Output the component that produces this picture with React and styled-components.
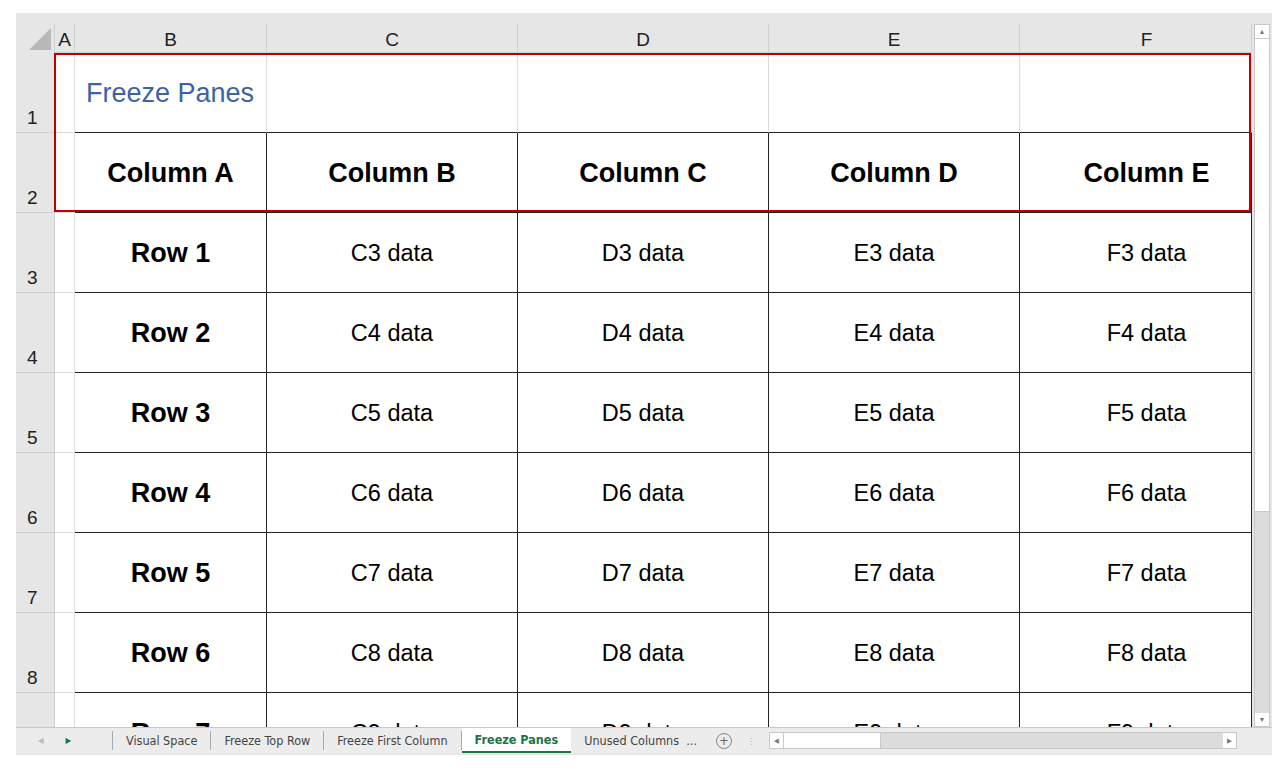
import React from 'react';
import styled, { createGlobalStyle } from 'styled-components';

const Global = createGlobalStyle`
  body { margin: 0; background: #fff; font-family: Arial, "Liberation Sans", sans-serif; }
`;

const Frame = styled.div`
  margin: 13px 16px 0;
  width: 1256px;
  height: 742px;
  display: flex;
  flex-direction: column;
  background: #e6e6e6;
`;

const Main = styled.div`
  display: flex;
  height: 714px;
`;

const Sheet = styled.div`
  position: relative;
  width: 1236px;
  overflow: hidden;
  background: #fff;
`;

const Grid = styled.div`
  display: grid;
  grid-template-columns: 39px 20px 192px 251px 251px 251px 232px;
  grid-template-rows: 11px 29px repeat(9, 80px);
`;

const Strip = styled.div`
  grid-column: 1 / -1;
  background: #e6e6e6;
`;

const Corner = styled.div`
  background: #e6e6e6;
  border-right: 1px solid #d0d0d0;
  position: relative;
  &::after {
    content: '';
    position: absolute;
    right: 3px;
    bottom: 3px;
    border-style: solid;
    border-width: 0 0 22px 22px;
    border-color: transparent transparent #b8b8b8 transparent;
  }
`;

const ColHead = styled.div`
  background: #e6e6e6;
  border-right: 1px solid #d0d0d0;
  border-bottom: 1px solid #d0d0d0;
  display: flex;
  align-items: center;
  justify-content: center;
  font-size: 19px;
  color: #222;
  padding-top: 3px;
  padding-left: ${p => (p.last ? '22px' : '0')};
`;

const RowHead = styled.div`
  background: #e6e6e6;
  border-bottom: 1px solid #d0d0d0;
  border-right: 1px solid #d0d0d0;
  display: flex;
  align-items: flex-end;
  padding: 0 0 3px 11px;
  font-size: 19px;
  color: #222;
`;

const Cell = styled.div`
  display: flex;
  align-items: center;
  justify-content: ${p => (p.left ? 'flex-start' : 'center')};
  padding-left: ${p => (p.left ? '11px' : p.last ? '22px' : '0')};
  border-right: 1px solid ${p => (p.dark ? '#222' : '#dcdcdc')};
  border-bottom: 1px solid ${p => (p.dark || p.under ? '#222' : '#dcdcdc')};
  font-size: ${p => (p.title ? '27px' : p.bold ? '27px' : '23.5px')};
  font-weight: ${p => (p.bold ? 700 : 400)};
  color: ${p => (p.title ? '#3d62a6' : '#000')};
  padding-top: 2px;
`;

const FreezeBox = styled.div`
  position: absolute;
  left: 38px;
  top: 40px;
  width: 1197px;
  height: 159px;
  border: 2px solid #c00000;
  box-sizing: border-box;
  pointer-events: none;
`;

const VScroll = styled.div`
  width: 20px;
  display: flex;
  flex-direction: column;
  align-items: center;
  padding-top: 11px;
  background: #e6e6e6;
`;

const VTrack = styled.div`
  width: 16px;
  flex: 1;
  display: flex;
  flex-direction: column;
  background: #dcdcdc;
  border: 1px solid #c8c8c8;
  box-sizing: border-box;
`;

const Arrow = styled.div`
  height: 13px;
  background: #fff;
  display: flex;
  align-items: center;
  justify-content: center;
  font-size: 7px;
  color: #777;
`;

const VThumb = styled.div`
  height: 472px;
  background: #fff;
  border-top: 1px solid #c8c8c8;
  border-bottom: 1px solid #c8c8c8;
`;

const Spacer = styled.div`
  flex: 1;
`;

const TabBar = styled.div`
  height: 25px;
  display: flex;
  align-items: stretch;
  background: #ececec;
  border-top: 1px solid #c8c8c8;
  font-family: "Liberation Sans Narrow", "DejaVu Sans Condensed", Arial, sans-serif;
  font-size: 12.5px;
  color: #444;
  white-space: nowrap;
`;

const Nav = styled.div`
  width: 97px;
  display: flex;
  align-items: center;
  gap: 22px;
  padding-left: 22px;
  font-size: 8px;
  color: #bbb;
  border-right: 1px solid #aaa;
  margin: 3px 0;
  box-sizing: border-box;
  span + span { color: #217346; }
`;

const Tab = styled.div`
  display: flex;
  align-items: center;
  padding: 0 13px;
  margin: ${p => (p.active ? '0' : '3px 0')};
  border-right: ${p => (p.active || p.plain ? 'none' : '1px solid #aaa')};
  background: ${p => (p.active ? '#fff' : 'transparent')};
  color: ${p => (p.active ? '#217346' : '#444')};
  font-weight: ${p => (p.active ? 700 : 400)};
  border-bottom: ${p => (p.active ? '2px solid #217346' : 'none')};
`;

const Plus = styled.div`
  width: 14px;
  height: 14px;
  border: 1px solid #888;
  border-radius: 50%;
  align-self: center;
  margin-left: 6px;
  display: flex;
  align-items: center;
  justify-content: center;
  font-size: 13px;
  line-height: 1;
  color: #666;
`;

const Dots = styled.div`
  align-self: center;
  margin: 0 12px 0 14px;
  color: #bbb;
  font-size: 10px;
  letter-spacing: -1px;
  writing-mode: vertical-rl;
`;

const HScroll = styled.div`
  width: 466px;
  height: 15px;
  align-self: center;
  display: flex;
  background: #dcdcdc;
  border: 1px solid #c8c8c8;
`;

const HThumb = styled.div`
  width: 96px;
  background: #fff;
  border-left: 1px solid #c8c8c8;
  border-right: 1px solid #c8c8c8;
`;

const HArrow = styled.div`
  width: 13px;
  background: #fff;
  display: flex;
  align-items: center;
  justify-content: center;
  font-size: 7px;
  color: #777;
`;

const cols = ['A', 'B', 'C', 'D', 'E', 'F'];
const heads = ['Column A', 'Column B', 'Column C', 'Column D', 'Column E'];

export default function App() {
  const rows = [];
  for (let r = 3; r <= 9; r++) {
    rows.push(
      <React.Fragment key={r}>
        <RowHead>{r}</RowHead>
        <Cell />
        <Cell dark bold>Row {r - 2}</Cell>
        {['C', 'D', 'E', 'F'].map(c => (
          <Cell dark key={c} last={c === 'F'}>{c}{r} data</Cell>
        ))}
      </React.Fragment>
    );
  }
  return (
    <>
      <Global />
      <Frame>
        <Main>
          <Sheet>
            <Grid>
              <Strip />
              <Corner />
              {cols.map(c => <ColHead key={c} last={c === 'F'}>{c}</ColHead>)}
              <RowHead>1</RowHead>
              <Cell />
              <Cell left title under>Freeze Panes</Cell>
              <Cell under /><Cell under /><Cell under /><Cell under />
              <RowHead>2</RowHead>
              <Cell />
              {heads.map((h, i) => <Cell dark bold key={h} last={i === 4}>{h}</Cell>)}
              {rows}
            </Grid>
            <FreezeBox />
          </Sheet>
          <VScroll>
            <VTrack>
              <Arrow>▲</Arrow>
              <VThumb />
              <Spacer />
              <Arrow>▼</Arrow>
            </VTrack>
          </VScroll>
        </Main>
        <TabBar>
          <Nav><span>◀</span><span>▶</span></Nav>
          <Tab>Visual Space</Tab>
          <Tab>Freeze Top Row</Tab>
          <Tab>Freeze First Column</Tab>
          <Tab active>Freeze Panes</Tab>
          <Tab plain>Unused Columns&nbsp; ...</Tab>
          <Plus>+</Plus>
          <Dots>⋯</Dots>
          <HScroll>
            <HArrow>◀</HArrow>
            <HThumb />
            <Spacer />
            <HArrow>▶</HArrow>
          </HScroll>
        </TabBar>
      </Frame>
    </>
  );
}
